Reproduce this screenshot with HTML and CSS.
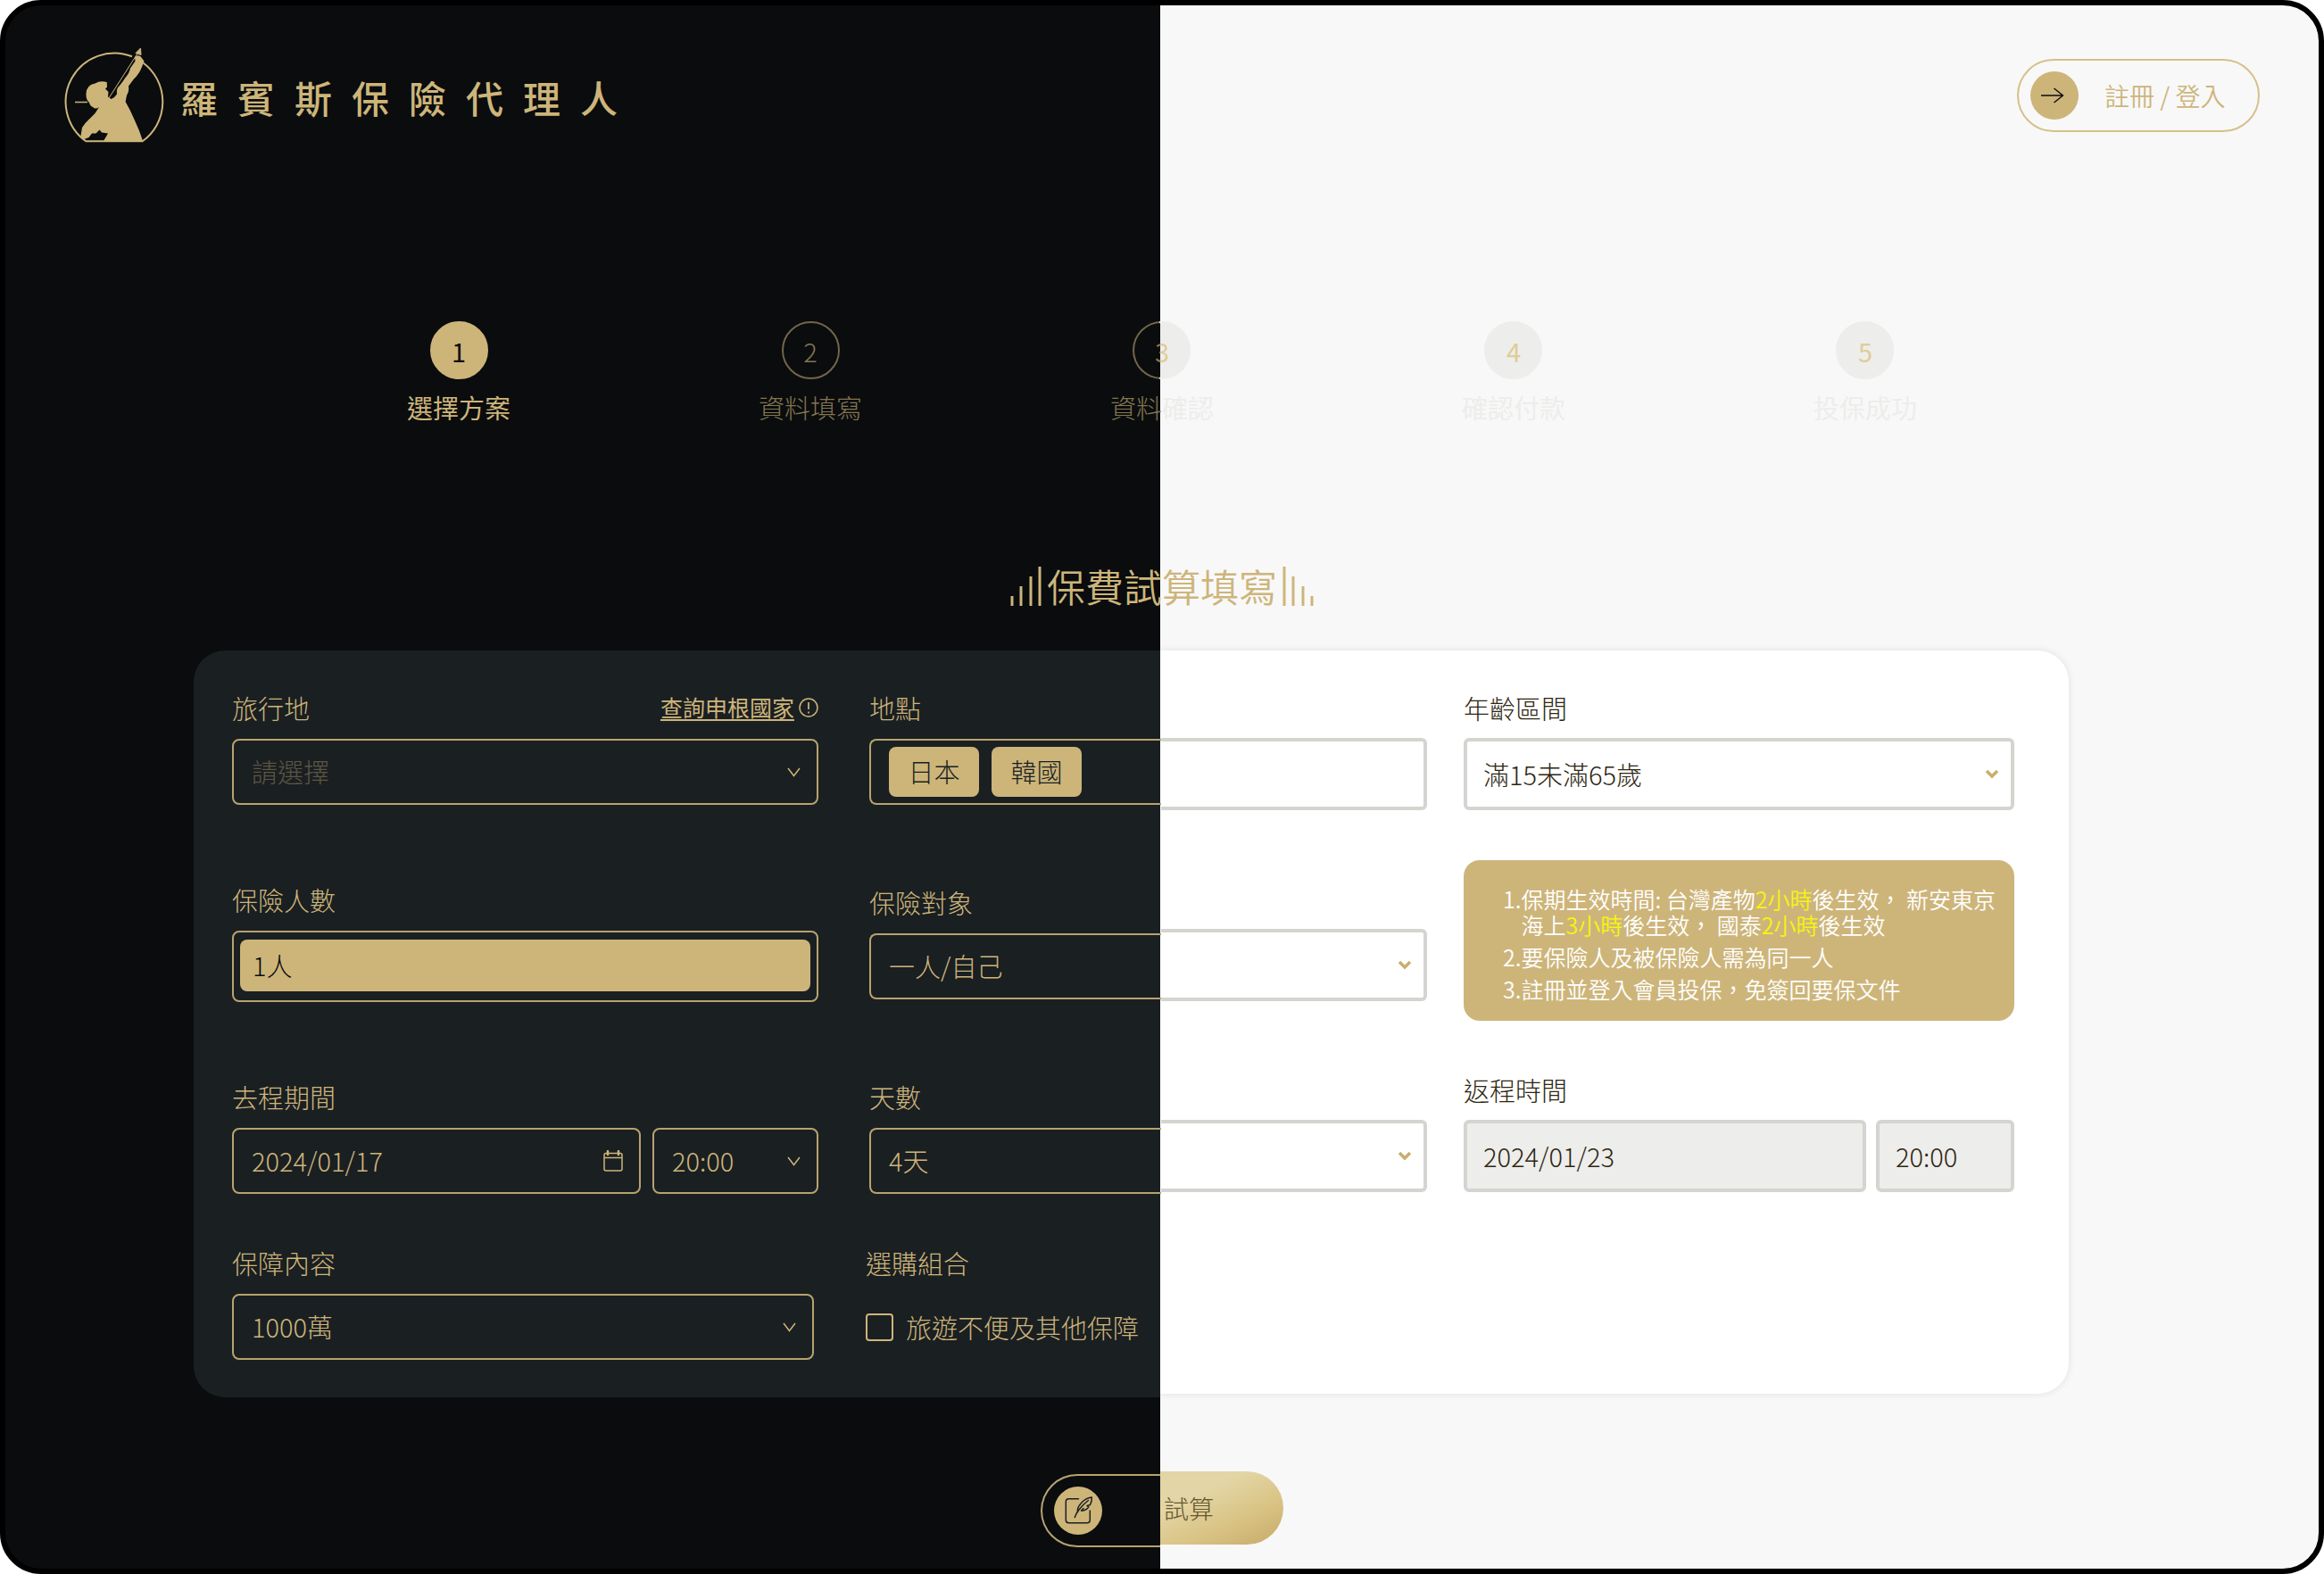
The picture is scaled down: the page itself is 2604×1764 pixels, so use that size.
FILE: index.html
```html
<!DOCTYPE html>
<html lang="zh-Hant">
<head>
<meta charset="utf-8">
<title>羅賓斯保險代理人</title>
<link rel="stylesheet" href="styles.css">
</head>
<body>
<div class="page">
  <header class="header">
    <a class="brand" href="#">
      <svg class="brand-logo" viewBox="0 0 112 107" aria-hidden="true">
        <path d="M76 10.300A54.500 54.500 0 0 0 24.300 105.300H87.700A54.500 54.500 0 0 0 88.500 17.500" fill="none" stroke="currentColor" stroke-width="2"/>
        <path d="M85.500 1 80 6.500 86 8.500Z M82 7 48 60" fill="currentColor" stroke="currentColor" stroke-width="1"/>
        <path d="M12 61.500H26" stroke="currentColor" stroke-width="1.500"/>
        <path fill="currentColor" d="M79 11 Q82 8 85.500 10.300 L89.500 15.500 87 22 Q84 30 78 35.500 L72 43.500 Q73 49 70 54 L68.600 61 73.500 70 79 82 84 93.500 88 105 H44 L49 96.500 42 95.500 39.500 92.500 35.500 96.500 31 96.500 27.500 101 21 103.500 18.500 99 20 90 Q23 85 27.500 81 L34.500 74 39 67 Q35 70 32 67 Q29 66 28 62 Q24 58 24.500 52 Q25 42 34.600 40.500 Q40 37 47.700 39 L48 44.500 46 46.500 49.500 50 49 55.500 52.600 58 Q57 56 59 52.500 Q58 46 62 43 Q66 38 68.500 34 Q73 29 74 23.500 L79.500 15.500Z"/>
      </svg>
      <span class="brand-name">羅賓斯保險代理人</span>
    </a>
    <button class="login" type="button">
      <span class="disc">
        <svg viewBox="0 0 54 54" aria-hidden="true"><path d="M12 27H36.500M26.500 19 36.500 27 26.500 35" fill="none" stroke="#0a0c0e" stroke-width="1.400"/></svg>
      </span>
      <span class="login-text">註冊 / 登入</span>
    </button>
  </header>

  <ol class="steps">
    <li class="step step-active"><span class="step-num">1</span><span class="step-label">選擇方案</span></li>
    <li class="step step-dark"><span class="step-num">2</span><span class="step-label">資料填寫</span></li>
    <li class="step step-split"><span class="step-num"><span class="step-digit">3</span></span><span class="step-label">資料<span class="on-light">確認</span></span></li>
    <li class="step step-light"><span class="step-num">4</span><span class="step-label">確認付款</span></li>
    <li class="step step-light"><span class="step-num">5</span><span class="step-label">投保成功</span></li>
  </ol>

  <h1 class="title">
    <svg class="title-bars" viewBox="0 0 35 44" aria-hidden="true"><path d="M2 33V44M12 22V44M23 11V44M33 0V44" stroke="currentColor" stroke-width="3"/></svg>
    <span class="title-text">保費試算填寫</span>
    <svg class="title-bars" viewBox="0 0 35 44" aria-hidden="true"><path d="M2 0V44M12 11V44M23 22V44M33 33V44" stroke="currentColor" stroke-width="3"/></svg>
  </h1>

  <form class="form">
    <div class="card">
      <div class="fields">
        <div class="stack">
          <div class="field">
            <div class="field-head">
              <label for="dest">旅行地</label>
              <a class="schengen" href="#"><span class="schengen-text">查詢申根國家</span><svg viewBox="0 0 22 22" aria-hidden="true"><circle cx="11" cy="11" r="10" fill="none" stroke="currentColor" stroke-width="1.500"/><path d="M11 5V13M11 15.500V17.500" stroke="currentColor" stroke-width="1.700"/></svg></a>
            </div>
            <div class="box">
              <select class="input placeholder" id="dest"><option>請選擇</option></select>
              <svg class="chevron" viewBox="0 0 15 11" aria-hidden="true"><path d="M1 1 7.500 9.500 14 1"/></svg>
            </div>
          </div>
          <div class="field">
            <label for="people">保險人數</label>
            <div class="box box-open">
              <select class="input picked" id="people"><option>1人</option></select>
            </div>
          </div>
          <div class="field">
            <label for="depart">去程期間</label>
            <div class="pair">
              <div class="box">
                <input class="input" id="depart" type="text" value="2024/01/17">
                <svg class="calendar" viewBox="0 0 22 24" aria-hidden="true"><path d="M1 5.500Q1 3.500 3 3.500H19Q21 3.500 21 5.500V21Q21 23 19 23H3Q1 23 1 21ZM1 8.500H21" fill="none" stroke="currentColor" stroke-width="1.500"/><path d="M5 1V5M17 1V5" stroke="currentColor" stroke-width="2.500" stroke-linecap="round"/></svg>
              </div>
              <div class="box">
                <select class="input" aria-label="去程時間"><option>20:00</option></select>
                <svg class="chevron" viewBox="0 0 15 11" aria-hidden="true"><path d="M1 1 7.500 9.500 14 1"/></svg>
              </div>
            </div>
          </div>
        </div>

        <div class="middle">
          <div class="frames" aria-hidden="true">
            <div class="frame"></div>
            <div class="frame"><svg class="chevron chevron-bold" viewBox="0 0 16 11"><path d="M2 2 8 8 14 2"/></svg></div>
            <div class="frame"><svg class="chevron chevron-bold" viewBox="0 0 16 11"><path d="M2 2 8 8 14 2"/></svg></div>
          </div>
          <div class="stack stack-middle">
            <div class="field">
              <span class="label" id="place">地點</span>
              <div class="halves" role="group" aria-labelledby="place">
                <div class="chips"><button class="chip" type="button">日本</button><button class="chip" type="button">韓國</button></div>
              </div>
            </div>
            <div class="field">
              <label for="insured">保險對象</label>
              <div class="halves"><select class="input" id="insured"><option>一人/自己</option></select></div>
            </div>
            <div class="field">
              <label for="days">天數</label>
              <div class="halves"><select class="input" id="days"><option>4天</option></select></div>
            </div>
          </div>
        </div>

        <div class="stack stack-light">
          <div class="field">
            <label for="age">年齡區間</label>
            <div class="box">
              <select class="input" id="age"><option>滿15未滿65歲</option></select>
              <svg class="chevron chevron-bold" viewBox="0 0 16 11" aria-hidden="true"><path d="M2 2 8 8 14 2"/></svg>
            </div>
          </div>
          <ol class="notes">
            <li><span>1.</span><span>保期生效時間: 台灣產物<mark>2小時</mark>後生效， 新安東京<br>海上<mark>3小時</mark>後生效， 國泰<mark>2小時</mark>後生效</span></li>
            <li><span>2.</span><span>要保險人及被保險人需為同一人</span></li>
            <li><span>3.</span><span>註冊並登入會員投保，免簽回要保文件</span></li>
          </ol>
          <div class="field">
            <label for="return">返程時間</label>
            <div class="pair pair-light">
              <div class="box box-locked"><input class="input" id="return" type="text" value="2024/01/23" readonly></div>
              <div class="box box-locked"><input class="input" type="text" value="20:00" aria-label="返程時刻" readonly></div>
            </div>
          </div>
        </div>
      </div>

      <div class="fields fields-last">
        <div class="field">
          <label for="cover">保障內容</label>
          <div class="box">
            <select class="input" id="cover"><option>1000萬</option></select>
            <svg class="chevron" viewBox="0 0 15 11" aria-hidden="true"><path d="M1 1 7.500 9.500 14 1"/></svg>
          </div>
        </div>
        <div class="field">
          <span class="label">選購組合</span>
          <label class="option"><input class="tick" type="checkbox"><span>旅遊不便及其他保障</span></label>
        </div>
      </div>
    </div>

    <button class="submit" type="submit">
      <span class="submit-dark">
        <span class="disc">
          <svg viewBox="0 0 54 54" aria-hidden="true"><g fill="none" stroke="#1b1f22" stroke-width="1.500" stroke-linecap="round" stroke-linejoin="round"><path d="M27.500 13.700H16.500Q13.300 13.700 13.300 17V37.500Q13.300 40.700 16.500 40.700H37Q40.300 40.700 40.300 37.500V27"/><path d="M23.300 34.500Q25 29 30.500 23Q34 19 38.500 15.500"/><path d="M26.500 28.500Q25.500 24 30.500 18.500Q35 13 42.300 12Q42.500 17 40.500 20.500L37 21.500 38.800 23Q35 27.500 30.500 27L33 24.500"/></g></svg>
        </span>
      </span>
      <span class="submit-light">試算</span>
    </button>
  </form>
</div>
</body>
</html>
```
FILE: styles.css
```css
:root {
  --gold: #cdb57a;
  --gold-edge: #b8a36e;
  --gold-dim: #857651;
  --ink: #0a0c0e;
  --panel: #1a1f22;
  --paper: #f8f8f8;
  --mist: #ededeb;
  --line: #d4d4d0;
  --text: #2e2612;
  --split: calc(50% - 2px);
}

* { box-sizing: border-box; }

body {
  margin: 0;
  background: #fff;
  color: var(--gold);
  font-family: "Noto Sans CJK TC", "Noto Sans", sans-serif;
  font-size: 29px;
  font-weight: 300;
  line-height: 42px;
}

button, input, select {
  margin: 0;
  padding: 0;
  border: 0;
  background: none;
  color: inherit;
  font: inherit;
}

ol { margin: 0; padding: 0; list-style: none; }
a { color: inherit; text-decoration: none; }
svg { display: block; flex: none; }

.page {
  min-height: 100vh;
  padding-bottom: 20px;
  border: 6px solid #000;
  border-radius: 46px;
  background: linear-gradient(90deg, var(--ink) var(--split), var(--paper) 0);
}

/* Header */
.header {
  display: flex;
  justify-content: space-between;
  align-items: center;
  padding: 47px 66px 0;
}

.brand { display: flex; align-items: center; gap: 18px; }
.brand-logo { width: 112px; height: 107px; }
.brand-name {
  padding-top: 4px;
  font-size: 42px;
  font-weight: 500;
  line-height: 60px;
  letter-spacing: 22px;
}

.login {
  display: flex;
  align-items: center;
  gap: 29px;
  width: 272px;
  height: 82px;
  padding-left: 13px;
  border: 2px solid #d6c08a;
  border-radius: 41px;
  font-size: 28px;
  font-weight: 350;
}

.disc {
  display: block;
  width: 54px;
  height: 54px;
  border-radius: 50%;
  background: var(--gold);
}

/* Progress */
.steps {
  display: grid;
  grid-template-columns: repeat(5, 1fr);
  width: 76%;
  margin: 200px auto 0;
}

.step { display: flex; flex-direction: column; align-items: center; gap: 10px; color: var(--gold-dim); }
.step-num {
  display: flex;
  align-items: center;
  justify-content: center;
  width: 65px;
  height: 65px;
  border: 2px solid #72664a;
  border-radius: 50%;
}
.step-active { color: var(--gold); font-weight: 400; }
.step-active .step-num { border-color: var(--gold); background: var(--gold); color: var(--ink); }
.step-light { color: var(--mist); font-weight: 400; }
.step-light .step-num { border-color: var(--mist); background: var(--mist); color: #e0cc96; }
.step-split .step-num {
  border-color: transparent;
  background:
    linear-gradient(90deg, var(--ink) var(--split), var(--mist) 0) padding-box,
    linear-gradient(90deg, #72664a var(--split), var(--mist) 0) border-box;
}
.step-digit {
  background: linear-gradient(90deg, var(--gold-dim) var(--split), #e0cc96 0);
  background-clip: text;
  color: transparent;
  font-weight: 400;
}
.on-light { color: var(--mist); font-weight: 400; }

.title {
  display: flex;
  justify-content: center;
  align-items: center;
  gap: 6px;
  margin: 150px 0 42px;
  font-size: 43px;
  font-weight: 350;
  line-height: 60px;
}
.title-text { padding-bottom: 2px; line-height: 58px; }
.title-bars { width: 35px; height: 44px; }

/* Card: dark panel on the left, light panel on the right */
.card {
  display: grid;
  grid-template-columns: minmax(0, 1083fr) minmax(0, 1018fr);
  grid-template-rows: auto auto;
  row-gap: 56px;
  margin: 0 280px 0 211px;
  isolation: isolate;
}
.card::before, .card::after { content: ""; grid-row: 1 / 3; z-index: -1; }
.card::before {
  grid-column: 2;
  margin-bottom: 4px;
  border-radius: 0 35px 35px 0;
  background: #fff;
  box-shadow: 0 0 8px rgba(0, 0, 0, 0.1);
}
.card::after {
  grid-column: 1;
  border-radius: 35px 0 0 35px;
  background: var(--panel);
}

.fields {
  display: grid;
  grid-column: 1 / -1;
  grid-row: 1;
  grid-template-columns: minmax(0, 657fr) 57fr minmax(0, 625fr) 41fr minmax(0, 617fr);
  align-items: start;
  padding: 43px 61px 0 43px;
}
.fields > :nth-child(2) { grid-column: 3; }
.fields > :nth-child(3) { grid-column: 5; }
.fields-last {
  grid-row: 2;
  grid-template-columns: minmax(0, 652fr) 58fr minmax(0, 1287fr);
  padding-top: 0;
  padding-bottom: 42px;
}

.stack { display: flex; flex-direction: column; gap: 85px; }
.stack-middle { gap: 88px; grid-column: 1 / -1; grid-row: 1; }
.stack-light { gap: 56px; color: var(--text); }

.field { display: flex; flex-direction: column; gap: 14px; }
.stack-light .field { gap: 13px; }
.field-head { display: flex; justify-content: space-between; }

.schengen { display: flex; align-items: center; gap: 5px; font-size: 25px; font-weight: 400; }
.schengen-text { line-height: 28px; border-bottom: 2px solid var(--gold); }
.schengen svg { width: 22px; height: 22px; }

.box {
  display: flex;
  align-items: center;
  height: 74px;
  padding-right: 18px;
  border: 2px solid var(--gold-edge);
  border-radius: 8px;
}
.box-open { height: 80px; padding: 8px 7px 10px; }

.input {
  flex: 1;
  min-width: 0;
  height: 100%;
  padding: 0 0 2px 20px;
  outline: 0;
  appearance: none;
}
.placeholder { color: #5d5642; }
.picked { padding-left: 14px; border-radius: 8px; background: var(--gold); color: var(--ink); }

.chevron { width: 15px; height: 11px; fill: none; stroke: currentColor; stroke-width: 1.5; }
.chevron-bold { width: 16px; stroke: #c9ae6c; stroke-width: 3.5; }
.calendar { width: 22px; height: 24px; }

.pair { display: grid; grid-template-columns: minmax(0, 458fr) minmax(0, 186fr); gap: 13px; }
.pair-light { grid-template-columns: minmax(0, 451fr) minmax(0, 155fr); gap: 11px; }

.stack-light .box, .frame {
  height: 81px;
  padding-right: 13px;
  border: 4px solid var(--line);
  border-radius: 6px;
}
.stack-light .input { padding-left: 18px; }
.stack-light .box-locked { padding-right: 0; background: var(--mist); }

/* Middle column straddles both panels */
.middle { display: grid; grid-template-columns: minmax(0, 327fr) minmax(0, 298fr); }
.frames {
  display: flex;
  flex-direction: column;
  grid-column: 2;
  grid-row: 1;
  gap: 133px;
  padding-top: 55px;
}
.frame {
  display: flex;
  align-items: center;
  justify-content: flex-end;
}
.middle .frame {
  border-left: 0;
  border-radius: 0 6px 6px 0;
}
.halves { display: grid; grid-template-columns: minmax(0, 327fr) minmax(0, 298fr); height: 74px; }
.halves::before {
  content: "";
  grid-column: 1;
  grid-row: 1;
  border: 2px solid var(--gold-edge);
  border-right: 0;
  border-radius: 8px 0 0 8px;
}
.halves > * { grid-column: 1 / -1; grid-row: 1; }
.halves .input { padding-left: 22px; }

.chips { display: flex; align-items: center; gap: 14px; padding-left: 22px; }
.chip {
  width: 101px;
  height: 56px;
  padding-bottom: 2px;
  border-radius: 8px;
  background: var(--gold);
  color: var(--panel);
}

.notes {
  display: flex;
  flex-direction: column;
  justify-content: center;
  gap: 7px;
  height: 180px;
  padding: 7px 0 0 44px;
  border-radius: 18px;
  background: var(--gold);
  color: #fff;
  font-size: 25px;
  font-weight: 350;
  line-height: 29px;
  white-space: nowrap;
}
.notes li { display: flex; }
.notes mark { background: none; color: #f5f50f; }

.option { display: flex; align-items: center; gap: 14px; height: 74px; }
.tick {
  width: 31px;
  height: 31px;
  border: 2px solid var(--gold);
  border-radius: 4px;
  appearance: none;
}

/* Submit */
.submit {
  display: grid;
  grid-template-columns: 134px 138px;
  height: 85px;
  margin: 83px auto 0;
  font-size: 28px;
}
.submit-dark, .submit-light { display: flex; align-items: center; height: 82px; }
.submit-dark {
  align-self: end;
  padding-left: 13px;
  border: 2px solid var(--gold-edge);
  border-right: 0;
  border-radius: 41px 0 0 41px;
}
.submit-light {
  padding-left: 4px;
  border-radius: 0 41px 41px 0;
  background: linear-gradient(155deg, #e3d6a6 30%, #d9c384 65%, #c6aa6a);
  color: #66572f;
}
```
